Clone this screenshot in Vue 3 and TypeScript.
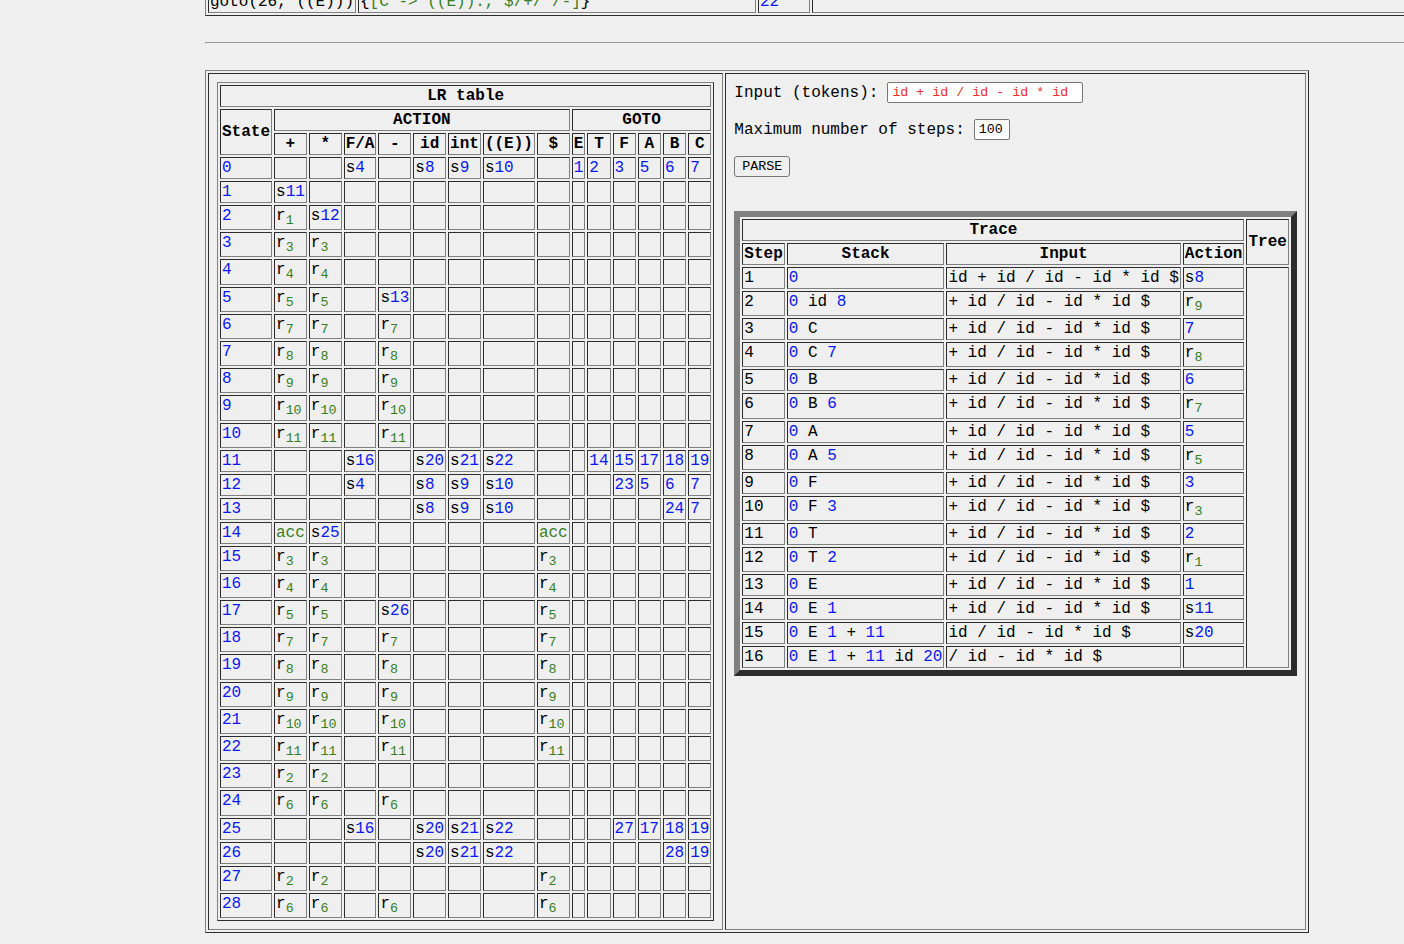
<script setup lang="ts">
import { ref } from 'vue'

interface Part {
  kind: 'plain' | 'state' | 'rule' | 'accept'
  text: string
}

interface LrRow {
  state: number
  cells: string[]
}

interface TraceRow {
  step: number
  stack: string
  input: string
  action: string
}

const tokens = ref('id + id / id - id * id')
const maxSteps = ref('100')

const terminals = ['+', '*', 'F/A', '-', 'id', 'int', '((E))', '$']
const nonterminals = ['E', 'T', 'F', 'A', 'B', 'C']
const columns = [...terminals, ...nonterminals]

// One line per state, columns separated by commas
const source = `
,,s4,,s8,s9,s10,,1,2,3,5,6,7
s11
r1,s12
r3,r3
r4,r4
r5,r5,,s13
r7,r7,,r7
r8,r8,,r8
r9,r9,,r9
r10,r10,,r10
r11,r11,,r11
,,s16,,s20,s21,s22,,,14,15,17,18,19
,,s4,,s8,s9,s10,,,,23,5,6,7
,,,,s8,s9,s10,,,,,,24,7
acc,s25,,,,,,acc
r3,r3,,,,,,r3
r4,r4,,,,,,r4
r5,r5,,s26,,,,r5
r7,r7,,r7,,,,r7
r8,r8,,r8,,,,r8
r9,r9,,r9,,,,r9
r10,r10,,r10,,,,r10
r11,r11,,r11,,,,r11
r2,r2
r6,r6,,r6
,,s16,,s20,s21,s22,,,,27,17,18,19
,,,,s20,s21,s22,,,,,,28,19
r2,r2,,,,,,r2
r6,r6,,r6,,,,r6`

const lrRows: LrRow[] = source
  .trim()
  .split('\n')
  .map((line, state) => {
    const values = line.split(',')
    return { state, cells: columns.map((_, i) => values[i] ?? '') }
  })

const rest = '+ id / id - id * id $'
const traceRows: TraceRow[] = [
  ['0', 'id + id / id - id * id $', 's8'],
  ['0 id 8', rest, 'r9'],
  ['0 C', rest, '7'],
  ['0 C 7', rest, 'r8'],
  ['0 B', rest, '6'],
  ['0 B 6', rest, 'r7'],
  ['0 A', rest, '5'],
  ['0 A 5', rest, 'r5'],
  ['0 F', rest, '3'],
  ['0 F 3', rest, 'r3'],
  ['0 T', rest, '2'],
  ['0 T 2', rest, 'r1'],
  ['0 E', rest, '1'],
  ['0 E 1', rest, 's11'],
  ['0 E 1 + 11', 'id / id - id * id $', 's20'],
  ['0 E 1 + 11 id 20', '/ id - id * id $', ''],
].map(([stack, input, action], i) => ({ step: i + 1, stack, input, action }))

function actionParts(value: string): Part[] {
  if (!value) return []
  if (value === 'acc') return [{ kind: 'accept', text: value }]
  if (value[0] === 's') return [{ kind: 'plain', text: 's' }, { kind: 'state', text: value.slice(1) }]
  if (value[0] === 'r') return [{ kind: 'plain', text: 'r' }, { kind: 'rule', text: value.slice(1) }]
  return [{ kind: 'state', text: value }]
}

function stackParts(value: string): Part[] {
  return value
    .split(/(\d+)/)
    .filter((text) => text !== '')
    .map((text) => ({ kind: /^\d+$/.test(text) ? 'state' : 'plain', text }))
}
</script>

<template>
  <main class="page">
    <div class="closure">
      <table class="grid closure-table">
        <colgroup>
          <col class="col-goto" />
          <col class="col-kernel" />
          <col class="col-state" />
          <col />
        </colgroup>
        <tbody>
          <tr>
            <td>goto(26, ((E)))</td>
            <td>{<span class="green">[C -&gt; ((E))., $/+/*/-]</span>}</td>
            <td><span class="blue">22</span></td>
            <td></td>
          </tr>
        </tbody>
      </table>
    </div>

    <hr class="rule" />

    <table class="grid outer">
      <tbody>
        <tr>
          <td class="pane">
            <table class="grid lr">
              <thead>
                <tr>
                  <th :colspan="columns.length + 1">LR table</th>
                </tr>
                <tr>
                  <th rowspan="2">State</th>
                  <th :colspan="terminals.length">ACTION</th>
                  <th :colspan="nonterminals.length">GOTO</th>
                </tr>
                <tr>
                  <th v-for="name in columns" :key="name">{{ name }}</th>
                </tr>
              </thead>
              <tbody>
                <tr v-for="row in lrRows" :key="row.state">
                  <td><span class="blue">{{ row.state }}</span></td>
                  <td v-for="(cell, i) in row.cells" :key="i"><template v-for="(part, j) in actionParts(cell)" :key="j"><sub v-if="part.kind === 'rule'" class="green">{{ part.text }}</sub><span v-else :class="{ blue: part.kind === 'state', green: part.kind === 'accept' }">{{ part.text }}</span></template></td>
                </tr>
              </tbody>
            </table>
          </td>
          <td class="pane">
            <form class="controls" @submit.prevent>
              <div class="field">
                <label for="tokens">Input (tokens):</label>
                <input id="tokens" v-model="tokens" class="box tokens" type="text" spellcheck="false" />
              </div>
              <div class="field">
                <label for="steps">Maximum number of steps:</label>
                <input id="steps" v-model="maxSteps" class="box steps" type="text" />
              </div>
              <div class="field">
                <button class="parse" type="submit">PARSE</button>
              </div>
            </form>
            <table class="grid trace">
              <thead>
                <tr>
                  <th colspan="4">Trace</th>
                  <th rowspan="2">Tree</th>
                </tr>
                <tr>
                  <th>Step</th>
                  <th>Stack</th>
                  <th>Input</th>
                  <th>Action</th>
                </tr>
              </thead>
              <tbody>
                <tr v-for="(row, r) in traceRows" :key="row.step">
                  <td>{{ row.step }}</td>
                  <td><span v-for="(part, j) in stackParts(row.stack)" :key="j" :class="{ blue: part.kind === 'state' }">{{ part.text }}</span></td>
                  <td>{{ row.input }}</td>
                  <td><template v-for="(part, j) in actionParts(row.action)" :key="j"><sub v-if="part.kind === 'rule'" class="green">{{ part.text }}</sub><span v-else :class="{ blue: part.kind === 'state' }">{{ part.text }}</span></template></td>
                  <td v-if="r === 0" :rowspan="traceRows.length"></td>
                </tr>
              </tbody>
            </table>
          </td>
        </tr>
      </tbody>
    </table>
  </main>
</template>

<style>
html,
body {
  background: #efefef;
}
</style>

<style scoped>
.page {
  --light: #808080;
  --dark: #2c2c2c;
  box-sizing: border-box;
  min-height: 100vh;
  padding: 0 0 8px 205px;
  overflow: hidden;
  background: #efefef;
  color: #000;
  font-family: "Liberation Mono", "Courier New", monospace;
  font-size: 16px;
}

.grid {
  border: 1px solid;
  border-color: var(--light) var(--dark) var(--dark) var(--light);
  border-collapse: separate;
  border-spacing: 2px;
}

.grid th,
.grid td {
  padding: 1px;
  border: 1px solid;
  border-color: var(--dark) var(--light) var(--light) var(--dark);
  white-space: pre;
}

.grid th {
  text-align: center;
  vertical-align: middle;
}

.grid td {
  text-align: left;
  vertical-align: baseline;
}

.blue {
  color: #0a18f5;
}

.green {
  color: #377e22;
}

.closure {
  display: flex;
  align-items: flex-end;
  height: 16px;
  margin-right: -8px;
}

.closure-table {
  flex: none;
  width: 100%;
  table-layout: fixed;
}

.col-goto {
  width: 148px;
}

.col-kernel {
  width: 398px;
}

.col-state {
  width: 52px;
}

.rule {
  margin: 26px -8px 26px 0;
  border: 1px solid;
  border-color: #9a9a9a #eee #eee #9a9a9a;
}

.grid .pane {
  padding: 8px;
  vertical-align: top;
  white-space: normal;
}

.controls {
  display: flex;
  flex-direction: column;
  gap: 16px;
  margin-bottom: 34px;
}

.field {
  display: flex;
  align-items: center;
  gap: 9px;
  height: 21px;
}

.box {
  box-sizing: border-box;
  height: 21px;
  padding: 1px 4px;
  border: 1px solid #767676;
  border-radius: 2px;
  background: #fff;
  color: #000;
  font-family: inherit;
}

.tokens {
  width: 196px;
  color: #eb3323;
}

.steps {
  width: 36px;
}

.parse {
  height: 21px;
  padding: 0 7px;
  border: 1px solid #767676;
  border-radius: 3px;
  background: #efefef;
  color: #000;
  font-family: inherit;
}

.trace {
  border-width: 6px;
}
</style>
